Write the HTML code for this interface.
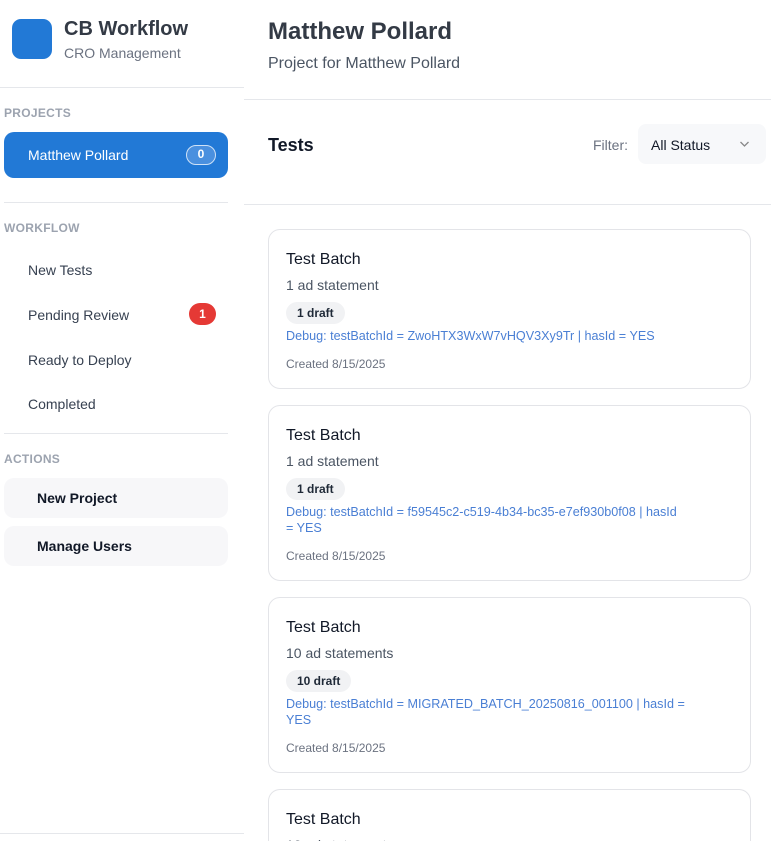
<!DOCTYPE html>
<html><head><style>
*{box-sizing:border-box;margin:0;padding:0}
html,body{width:771px;height:841px;overflow:hidden}
body{background:#fff;font-family:"Liberation Sans",Arial,sans-serif;position:relative;color:#111827}
.a{position:absolute;white-space:nowrap}
.hr{position:absolute;height:1px;background:#e5e7eb}
.sec{font-size:12px;font-weight:bold;color:#9ca3af;letter-spacing:.3px}
.nav{font-size:14px;color:#374151;left:28px}
.act{position:absolute;left:4px;width:224px;height:40px;border-radius:10px;background:#f7f7f9;font-size:14px;font-weight:bold;color:#111827;padding-left:33px;line-height:40px}
.card{position:absolute;left:268px;width:483px;border:1px solid #e3e4e8;border-radius:12px;background:#fff;overflow:hidden}
.card .t{position:absolute;left:17px;font-size:16px;color:#111827}
.card .s{position:absolute;left:17px;font-size:14px;color:#4b5563}
.card .b{position:absolute;left:17px;height:22px;border-radius:11px;background:#f1f2f4;font-size:12px;font-weight:bold;color:#1f2937;padding:0 11px;line-height:22px}
.card .d{position:absolute;left:17px;width:408px;font-size:12.6px;color:#4a7fd4;line-height:16px}
.card .c{position:absolute;left:17px;font-size:12px;color:#6b7280}
</style></head><body>
<div class="a" style="left:12px;top:19px;width:40px;height:40px;border-radius:9px;background:#2279d6"></div>
<div class="a" style="left:64px;top:18px;font-size:20px;font-weight:bold;color:#333a45">CB Workflow</div>
<div class="a" style="left:64px;top:45px;font-size:14px;color:#6b7280">CRO Management</div>
<div class="hr" style="left:0;top:87px;width:244px"></div>
<div class="a sec" style="left:4px;top:106px">PROJECTS</div>
<div class="a" style="left:4px;top:132px;width:224px;height:46px;border-radius:10px;background:#2279d6"></div>
<div class="a" style="left:28px;top:147px;font-size:14px;color:#fff">Matthew Pollard</div>
<div class="a" style="left:186px;top:145px;width:30px;height:20px;border-radius:10px;border:1.5px solid #cfe2f7;background:#4a90df;color:#fff;font-size:12px;font-weight:bold;text-align:center;line-height:17px">0</div>
<div class="hr" style="left:4px;top:202px;width:224px"></div>
<div class="a sec" style="left:4px;top:221px">WORKFLOW</div>
<div class="a nav" style="top:262px">New Tests</div>
<div class="a nav" style="top:307px">Pending Review</div>
<div class="a" style="left:189px;top:303px;width:27px;height:22px;border-radius:11px;background:#e53935;color:#fff;font-size:12px;font-weight:bold;text-align:center;line-height:22px">1</div>
<div class="a nav" style="top:352px">Ready to Deploy</div>
<div class="a nav" style="top:396px">Completed</div>
<div class="hr" style="left:4px;top:433px;width:224px"></div>
<div class="a sec" style="left:4px;top:452px">ACTIONS</div>
<div class="act" style="top:478px">New Project</div>
<div class="act" style="top:526px">Manage Users</div>
<div class="hr" style="left:0;top:833px;width:244px"></div>

<div class="a" style="left:268px;top:18px;font-size:24px;font-weight:bold;color:#333a45">Matthew Pollard</div>
<div class="a" style="left:268px;top:55px;font-size:16px;color:#4b5563">Project for Matthew Pollard</div>
<div class="hr" style="left:244px;top:99px;width:527px"></div>
<div class="a" style="left:268px;top:135px;font-size:18px;font-weight:bold;color:#111827">Tests</div>
<div class="a" style="left:593px;top:137px;font-size:14px;color:#6b7280">Filter:</div>
<div class="a" style="left:638px;top:124px;width:128px;height:40px;border-radius:8px;background:#f7f8fa"></div>
<div class="a" style="left:651px;top:137px;font-size:14px;color:#111827">All Status</div>
<svg class="a" style="left:739px;top:140px" width="11" height="8" viewBox="0 0 11 8"><path d="M1.5 2l4 4 4-4" fill="none" stroke="#888" stroke-width="1.3"/></svg>
<div class="hr" style="left:244px;top:204px;width:527px"></div>

<div class="card" style="top:229px;height:160px">
<div class="t" style="top:21px">Test Batch</div>
<div class="s" style="top:47px">1 ad statement</div>
<div class="b" style="top:72px">1 draft</div>
<div class="d" style="top:98px">Debug: testBatchId = ZwoHTX3WxW7vHQV3Xy9Tr | hasId = YES</div>
<div class="c" style="top:127px">Created 8/15/2025</div>
</div>
<div class="card" style="top:405px;height:176px">
<div class="t" style="top:21px">Test Batch</div>
<div class="s" style="top:47px">1 ad statement</div>
<div class="b" style="top:72px">1 draft</div>
<div class="d" style="top:98px;white-space:normal">Debug: testBatchId = f59545c2-c519-4b34-bc35-e7ef930b0f08 | hasId<br>= YES</div>
<div class="c" style="top:143px">Created 8/15/2025</div>
</div>
<div class="card" style="top:597px;height:176px">
<div class="t" style="top:21px">Test Batch</div>
<div class="s" style="top:47px">10 ad statements</div>
<div class="b" style="top:72px">10 draft</div>
<div class="d" style="top:98px;white-space:normal">Debug: testBatchId = MIGRATED_BATCH_20250816_001100 | hasId =<br>YES</div>
<div class="c" style="top:143px">Created 8/15/2025</div>
</div>
<div class="card" style="top:789px;height:52px;border-bottom:none;border-radius:12px 12px 0 0">
<div class="t" style="top:21px">Test Batch</div>
<div class="s" style="top:47px">10 ad statements</div>
</div>
</body></html>
